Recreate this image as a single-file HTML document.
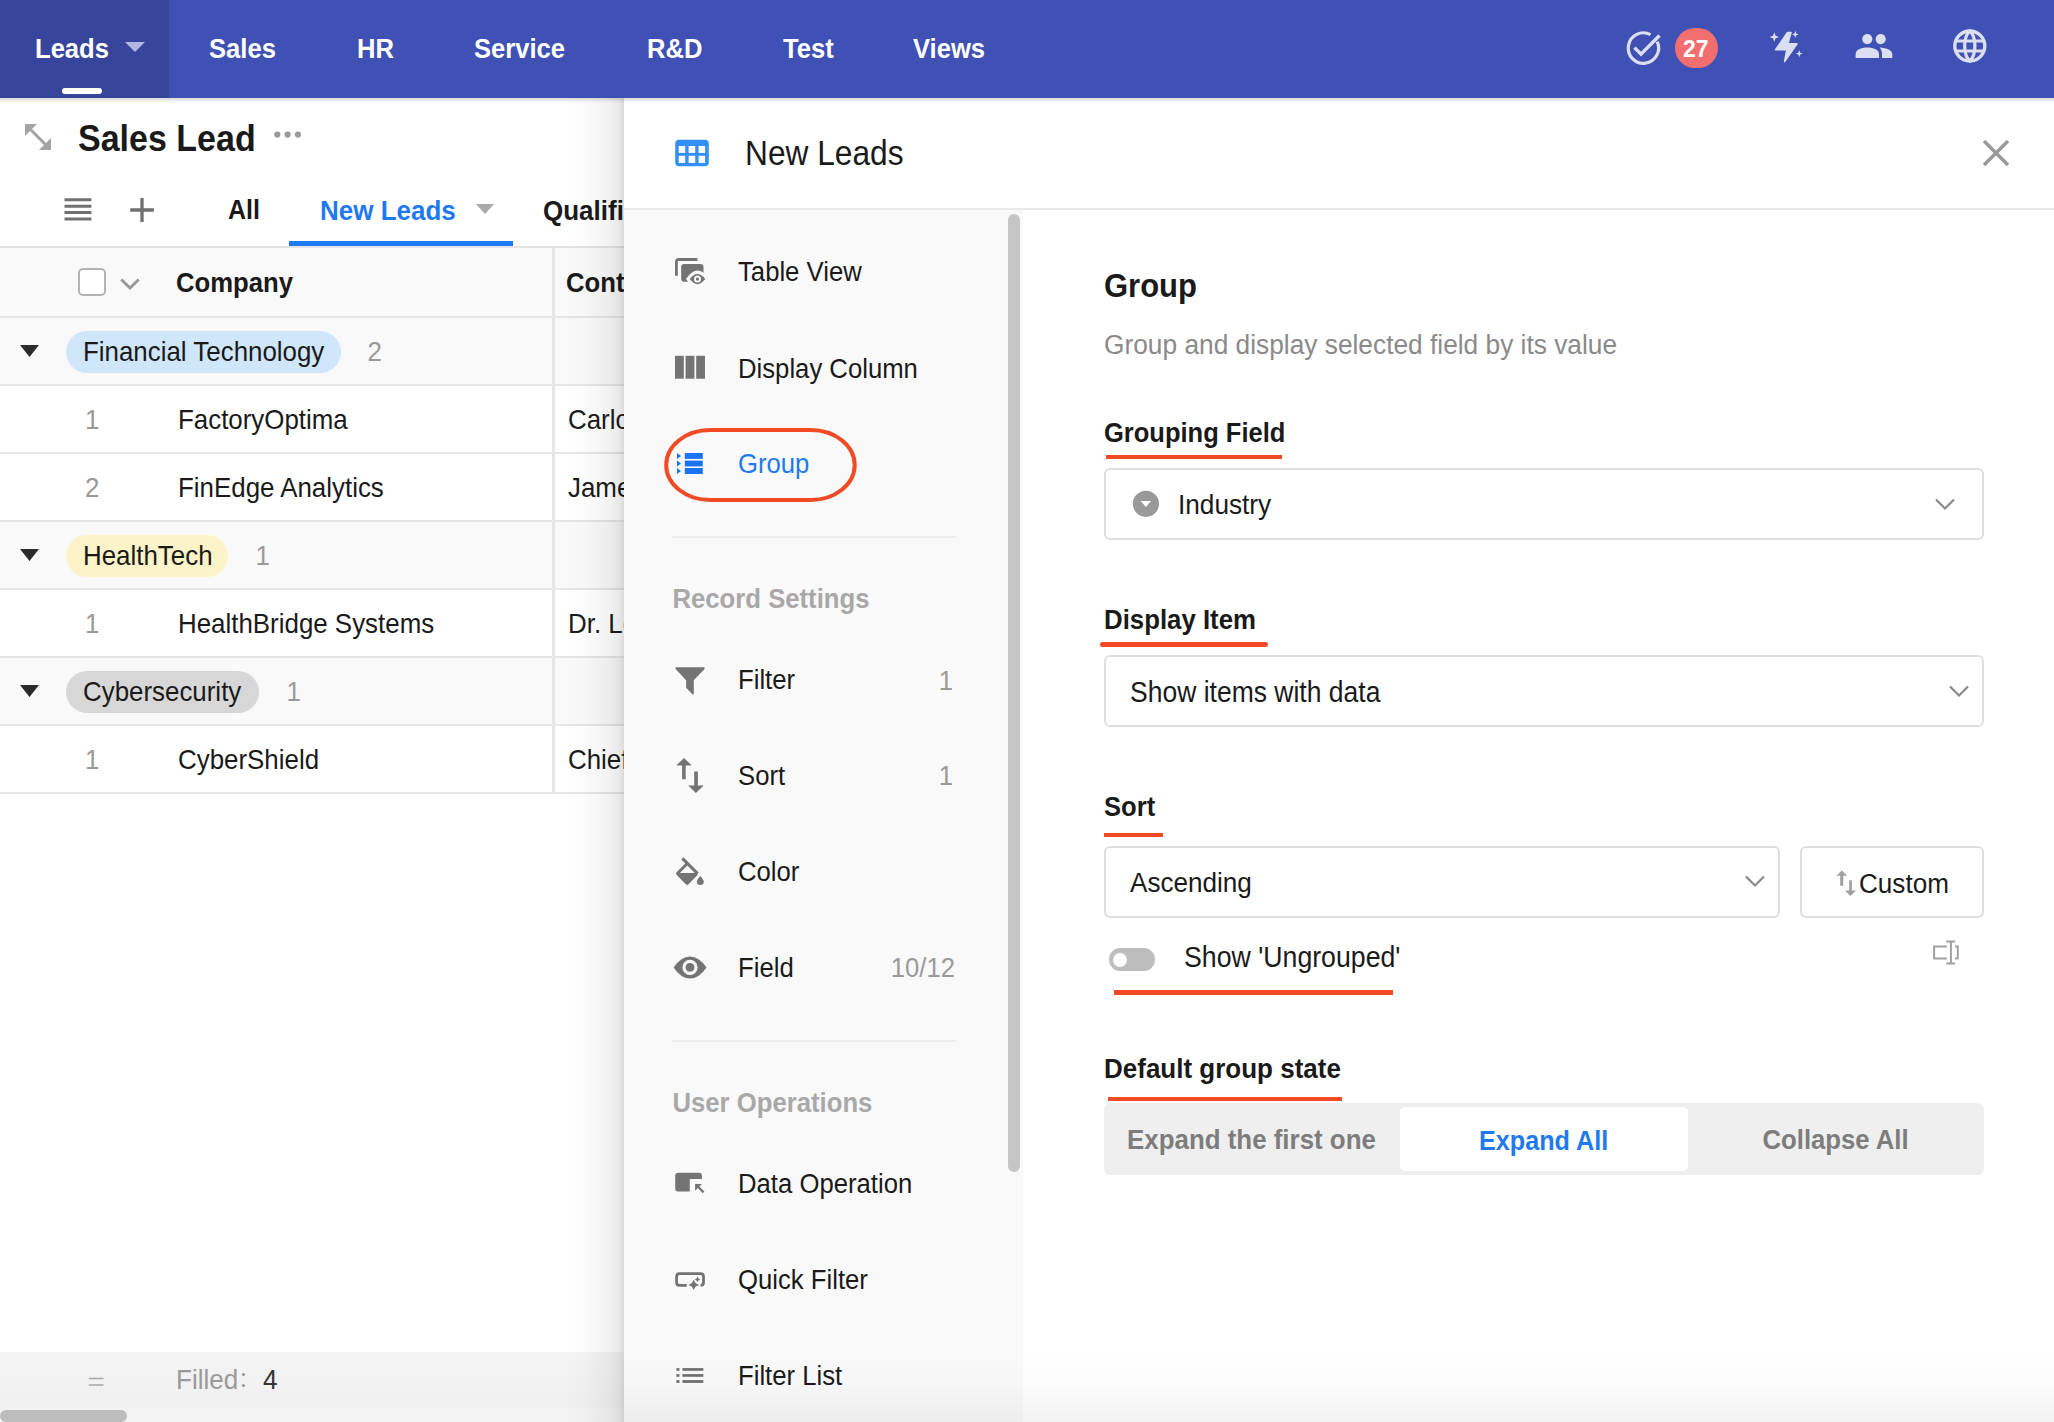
<!DOCTYPE html>
<html><head><meta charset="utf-8">
<style>
*{box-sizing:border-box;margin:0;padding:0}
html,body{width:2054px;height:1422px;overflow:hidden;background:#fff;font-family:"Liberation Sans",sans-serif;color:#1c1c1c}
.a{position:absolute}
.t{position:absolute;line-height:1;white-space:nowrap;transform:scaleY(1.08);transform-origin:0 84.65%}
.b{font-weight:bold}
#nav{left:0;top:0;width:2054px;height:98px;background:#3f51b5}
#nav .t{color:#fff;font-weight:bold;font-size:25.6px;top:37px}
</style></head><body>

<!-- NAV -->
<div id="nav" class="a">
  <div class="a" style="left:0;top:0;width:169px;height:98px;background:#37459c"></div>
  <div class="t" style="left:35px">Leads</div>
  <svg class="a" style="left:125px;top:42px" width="20" height="10" viewBox="0 0 20 10"><path d="M0 0H20L10 10Z" fill="#b2b6e0"/></svg>
  <div class="a" style="left:62px;top:88px;width:40px;height:6px;border-radius:3px;background:#fff"></div>
  <div class="t" style="left:209px">Sales</div>
  <div class="t" style="left:357px">HR</div>
  <div class="t" style="left:474px">Service</div>
  <div class="t" style="left:647px">R&amp;D</div>
  <div class="t" style="left:783px">Test</div>
  <div class="t" style="left:913px">Views</div>
  <!-- right icons -->
  <svg class="a" style="left:1620px;top:26px" width="46" height="44" viewBox="1620 26 46 44">
    <path d="M1657.2 41.6 A15.2 15.2 0 1 1 1650.5 34.6" fill="none" stroke="#dcdff2" stroke-width="3.2"/>
    <path d="M1634.5 47.6 L1641 54.2 L1659.5 35.5" fill="none" stroke="#dcdff2" stroke-width="3.4"/>
  </svg>
  <div class="a" style="left:1675px;top:28px;width:43px;height:40px;border-radius:21px;background:#f36e6e"></div>
  <div class="t b" style="left:1683px;top:38px;font-size:23px;color:#fff">27</div>
  <svg class="a" style="left:1765px;top:28px" width="42" height="38" viewBox="1765 28 42 38">
    <path d="M1787.5 32.5 L1791 32.5 L1787.8 43.8 L1797 43.8 L1784.6 61.5 L1786.8 49.8 L1775.6 49.8 Z" fill="#dcdff2" stroke="#dcdff2" stroke-width="1.6" stroke-linejoin="round"/>
    <path d="M1774.3 32.2 L1775.6 35.8 L1779.2 37 L1775.6 38.2 L1774.3 41.8 L1773 38.2 L1769.4 37 L1773 35.8 Z" fill="#dcdff2"/>
    <path d="M1795.3 30.8 L1796.2 33.5 L1798.8 34.4 L1796.2 35.3 L1795.3 38 L1794.4 35.3 L1791.8 34.4 L1794.4 33.5 Z" fill="#dcdff2"/>
    <path d="M1799.2 50 L1800.1 52.7 L1802.7 53.6 L1800.1 54.5 L1799.2 57.2 L1798.3 54.5 L1795.7 53.6 L1798.3 52.7 Z" fill="#dcdff2"/>
  </svg>
  <svg class="a" style="left:1850px;top:28px" width="48" height="36" viewBox="1850 28 48 36">
    <circle cx="1867.3" cy="39.1" r="5.1" fill="#dcdff2"/>
    <circle cx="1880.7" cy="39.1" r="5.1" fill="#dcdff2"/>
    <path d="M1855.6 58 V54 C1855.6 50 1861 47.6 1867.3 47.6 C1873.6 47.6 1879 50 1879 54 V58 Z" fill="#dcdff2"/>
    <path d="M1882 58 V54 C1882 51 1881 49.2 1879.6 47.6 C1887 48 1892.3 50.5 1892.3 54 V58 Z" fill="#dcdff2"/>
  </svg>
  <svg class="a" style="left:1950px;top:26px" width="40" height="40" viewBox="1950 26 40 40">
    <circle cx="1969.8" cy="46" r="15" fill="none" stroke="#dcdff2" stroke-width="3.4"/>
    <path d="M1969.8 31 C1963 37 1963 55 1969.8 61 C1976.6 55 1976.6 37 1969.8 31 Z" fill="none" stroke="#dcdff2" stroke-width="3.2"/>
    <path d="M1956 41 H1983.6 M1956 51 H1983.6" stroke="#dcdff2" stroke-width="3.2"/>
  </svg>
</div>



<!-- LEFT PAGE -->
<svg class="a" style="left:22px;top:120px" width="34" height="34" viewBox="22 120 34 34">
  <path d="M27.5 126.5 L48.5 147.5" stroke="#a3a3a3" stroke-width="3"/>
  <path d="M25 124 H37 L25 136 Z" fill="#a3a3a3"/>
  <path d="M51 150 H39 L51 138 Z" fill="#a3a3a3"/>
</svg>
<div class="t b" style="left:78px;top:121.5px;font-size:34px;color:#1a1a1a">Sales Lead</div>
<svg class="a" style="left:272px;top:130px" width="32" height="10" viewBox="272 130 32 10">
  <circle cx="277.3" cy="134.6" r="3.1" fill="#9a9a9a"/><circle cx="287.6" cy="134.6" r="3.1" fill="#9a9a9a"/><circle cx="297.9" cy="134.6" r="3.1" fill="#9a9a9a"/>
</svg>
<!-- tabs -->
<svg class="a" style="left:60px;top:194px" width="100" height="32" viewBox="60 194 100 32">
  <path d="M64.5 199.7 H91.4 M64.5 206.3 H91.4 M64.5 212.6 H91.4 M64.5 218.9 H91.4" stroke="#707070" stroke-width="3"/>
  <path d="M142 198 V222 M130.2 210 H153.9" stroke="#707070" stroke-width="3.3"/>
</svg>
<div class="t b" style="left:228px;top:198px;font-size:25px;color:#1a1a1a">All</div>
<div class="t b" style="left:320px;top:198px;font-size:26px;color:#1f7af2">New Leads</div>
<svg class="a" style="left:476px;top:203px" width="19" height="12" viewBox="0 0 19 12"><path d="M0 1H18L9 11Z" fill="#a8a8a8"/></svg>
<div class="t b" style="left:543px;top:198px;font-size:26px;color:#1a1a1a">Qualified</div>
<div class="a" style="left:289px;top:241px;width:224px;height:6px;background:#1f7af2"></div>
<!-- table -->
<div class="a" style="left:0;top:246px;width:624px;height:2px;background:#e3e3e3"></div>
<div class="a" style="left:0;top:248px;width:624px;height:68px;background:#f9f9f9"></div>
<div class="a" style="left:78px;top:268px;width:28px;height:28px;border:2px solid #b3b3b3;border-radius:5px;background:#fff"></div>
<svg class="a" style="left:118px;top:274px" width="24" height="20" viewBox="118 274 24 20"><path d="M121.3 279.5 L130 288 L138.7 279.5" fill="none" stroke="#999" stroke-width="3"/></svg>
<div class="t b" style="left:176px;top:271px;font-size:25.7px;color:#1a1a1a">Company</div>
<div class="t b" style="left:566px;top:271px;font-size:25.7px;color:#1a1a1a">Contact</div>
<div class="a" style="left:0;top:317px;width:624px;height:68px;background:#f9f9f9"></div>
<svg class="a" style="left:20px;top:344px" width="20" height="14" viewBox="0 0 20 14"><path d="M0 1H19L9.5 13Z" fill="#2b2b2b"/></svg>
<div class="a" style="left:66px;top:331px;width:275px;height:42px;border-radius:21px;background:#cfe6fb"></div>
<div class="t" style="left:83px;top:340px;font-size:25.9px;color:#1a1a1a">Financial Technology</div>
<div class="t" style="left:367.5px;top:340px;font-size:25.9px;color:#999">2</div>
<div class="t" style="left:85px;top:408px;font-size:25.9px;color:#999">1</div>
<div class="t" style="left:178px;top:408px;font-size:25.9px;color:#1a1a1a">FactoryOptima</div>
<div class="t" style="left:568px;top:408px;font-size:25.9px;color:#1a1a1a">Carlos</div>
<div class="t" style="left:85px;top:476px;font-size:25.9px;color:#999">2</div>
<div class="t" style="left:178px;top:476px;font-size:25.9px;color:#1a1a1a">FinEdge Analytics</div>
<div class="t" style="left:568px;top:476px;font-size:25.9px;color:#1a1a1a">James</div>
<div class="a" style="left:0;top:521px;width:624px;height:68px;background:#f9f9f9"></div>
<svg class="a" style="left:20px;top:548px" width="20" height="14" viewBox="0 0 20 14"><path d="M0 1H19L9.5 13Z" fill="#2b2b2b"/></svg>
<div class="a" style="left:66px;top:535px;width:162px;height:42px;border-radius:21px;background:#fdf3c8"></div>
<div class="t" style="left:83px;top:544px;font-size:25.9px;color:#1a1a1a">HealthTech</div>
<div class="t" style="left:255.5px;top:544px;font-size:25.9px;color:#999">1</div>
<div class="t" style="left:85px;top:612px;font-size:25.9px;color:#999">1</div>
<div class="t" style="left:178px;top:612px;font-size:25.9px;color:#1a1a1a">HealthBridge Systems</div>
<div class="t" style="left:568px;top:612px;font-size:25.9px;color:#1a1a1a">Dr. Lee</div>
<div class="a" style="left:0;top:657px;width:624px;height:68px;background:#f9f9f9"></div>
<svg class="a" style="left:20px;top:684px" width="20" height="14" viewBox="0 0 20 14"><path d="M0 1H19L9.5 13Z" fill="#2b2b2b"/></svg>
<div class="a" style="left:66px;top:671px;width:193px;height:42px;border-radius:21px;background:#d7d7d7"></div>
<div class="t" style="left:83px;top:680px;font-size:25.9px;color:#1a1a1a">Cybersecurity</div>
<div class="t" style="left:286.5px;top:680px;font-size:25.9px;color:#999">1</div>
<div class="t" style="left:85px;top:748px;font-size:25.9px;color:#999">1</div>
<div class="t" style="left:178px;top:748px;font-size:25.9px;color:#1a1a1a">CyberShield</div>
<div class="t" style="left:568px;top:748px;font-size:25.9px;color:#1a1a1a">Chief</div>
<div class="a" style="left:0;top:316px;width:624px;height:2px;background:#e6e6e6"></div>
<div class="a" style="left:0;top:384px;width:624px;height:2px;background:#e6e6e6"></div>
<div class="a" style="left:0;top:452px;width:624px;height:2px;background:#e6e6e6"></div>
<div class="a" style="left:0;top:520px;width:624px;height:2px;background:#e6e6e6"></div>
<div class="a" style="left:0;top:588px;width:624px;height:2px;background:#e6e6e6"></div>
<div class="a" style="left:0;top:656px;width:624px;height:2px;background:#e6e6e6"></div>
<div class="a" style="left:0;top:724px;width:624px;height:2px;background:#e6e6e6"></div>
<div class="a" style="left:0;top:792px;width:624px;height:2px;background:#e6e6e6"></div>
<div class="a" style="left:552px;top:248px;width:3px;height:545px;background:#e6e6e6"></div>
<div class="a" style="left:0;top:1352px;width:624px;height:56px;background:linear-gradient(#f4f4f4,#f0f0f0)"></div>
<div class="a" style="left:0;top:1408px;width:624px;height:14px;background:#f3f3f3"></div>
<div class="a" style="left:0;top:1410px;width:127px;height:12px;border-radius:6px;background:#bdbdbd"></div>
<svg class="a" style="left:86px;top:1374px" width="20" height="14" viewBox="86 1374 20 14"><path d="M88.8 1378.5 H103.5 M88.8 1385 H103.5" stroke="#a6a6a6" stroke-width="1.6"/></svg>
<div class="t" style="left:176px;top:1367px;font-size:26px;color:#9a9a9a">Filled</div>
<svg class="a" style="left:238px;top:1370px" width="10" height="20" viewBox="238 1370 10 20"><circle cx="243.5" cy="1374.5" r="1.6" fill="#9a9a9a"/><circle cx="243.5" cy="1385.5" r="1.6" fill="#9a9a9a"/></svg>
<div class="t" style="left:263px;top:1367px;font-size:26px;color:#333">4</div>


<!-- PANEL -->
<div class="a" style="left:624px;top:98px;width:1430px;height:1324px;background:#fff;"></div>
<div class="a" style="left:564px;top:98px;width:60px;height:1324px;background:linear-gradient(to right,rgba(0,0,0,0) 0%,rgba(0,0,0,0.015) 40%,rgba(0,0,0,0.05) 75%,rgba(0,0,0,0.09) 92%,rgba(0,0,0,0.14) 100%)"></div>
<div class="a" style="left:624px;top:208px;width:1430px;height:2px;background:#e9e9e9"></div>
<svg class="a" style="left:672px;top:136px" width="40" height="34" viewBox="672 136 40 34">
  <rect x="675.2" y="139.7" width="33.6" height="26.5" rx="4" fill="#3390f7"/>
  <rect x="678.7" y="146" width="6.5" height="6.9" fill="#fff"/><rect x="688.6" y="146" width="6.6" height="6.9" fill="#fff"/><rect x="698.6" y="146" width="6.5" height="6.9" fill="#fff"/>
  <rect x="678.7" y="155.8" width="6.5" height="7.1" fill="#fff"/><rect x="688.6" y="155.8" width="6.6" height="7.1" fill="#fff"/><rect x="698.6" y="155.8" width="6.5" height="7.1" fill="#fff"/>
</svg>
<div class="t" style="left:745px;top:138.9px;font-size:31.7px;color:#1a1a1a;">New Leads</div>
<svg class="a" style="left:1978px;top:135px" width="36" height="36" viewBox="1978 135 36 36"><path d="M1984 141 L2008 165 M2008 141 L1984 165" stroke="#999" stroke-width="3.5"/></svg>
<!-- sidebar -->
<div class="a" style="left:624px;top:210px;width:399px;height:1212px;background:#f9f9f9"></div>
<div class="a" style="left:1008px;top:214px;width:12px;height:958px;border-radius:6px;background:#c6c6c6"></div>
<svg class="a" style="left:670px;top:250px" width="40" height="40" viewBox="670 250 40 40">
  <path d="M676.4 275.8 V262 Q676.4 259.5 679 259.5 H697.4" fill="none" stroke="#747474" stroke-width="2.8"/>
  <rect x="681.2" y="264" width="22.3" height="17.8" rx="3" fill="#747474"/>
  <path d="M686 279.1 Q691.5 270.6 697.5 270.6 Q703.5 270.6 709 279.1 Q703.5 287.6 697.5 287.6 Q691.5 287.6 686 279.1 Z" fill="#f9f9f9"/>
  <path d="M689.8 279.1 Q693.5 274 697.5 274 Q701.5 274 705.2 279.1 Q701.5 284.2 697.5 284.2 Q693.5 284.2 689.8 279.1 Z" fill="#747474"/>
  <circle cx="697.5" cy="279.1" r="3.5" fill="#f9f9f9"/><circle cx="697.5" cy="279.1" r="1.6" fill="#747474"/>
</svg>
<svg class="a" style="left:670px;top:350px" width="40" height="34" viewBox="670 350 40 34">
  <rect x="675" y="355.8" width="8.8" height="22.9" fill="#747474"/><rect x="685.6" y="355.8" width="8.8" height="22.9" fill="#747474"/><rect x="696.2" y="355.8" width="8.8" height="22.9" fill="#747474"/>
</svg>
<svg class="a" style="left:672px;top:448px" width="36" height="30" viewBox="672 448 36 30">
  <path d="M677 453 L681 456 L677 459 Z M677 460.6 L681 463.5 L677 466.4 Z M677 468 L681 471 L677 474 Z" fill="#1a73f5"/>
  <rect x="684.8" y="453" width="18" height="5.9" fill="#1a73f5"/><rect x="684.8" y="460.6" width="18" height="5.8" fill="#1a73f5"/><rect x="684.8" y="468" width="18" height="6" fill="#1a73f5"/>
</svg>
<svg class="a" style="left:660px;top:424px" width="202" height="82" viewBox="660 424 202 82">
  <rect x="666.2" y="430" width="188.5" height="70" rx="44" ry="35" fill="none" stroke="#f24a25" stroke-width="4"/>
</svg>
<div class="a" style="left:672px;top:536px;width:284px;height:2px;background:#ebebeb"></div>
<svg class="a" style="left:670px;top:660px" width="40" height="40" viewBox="670 660 40 40">
  <path d="M676.5 667.3 H703.6 Q705.5 667.3 704.5 669 L693.8 680.3 V693 Q693.8 695.5 692.2 694 L686.1 687.7 V680.3 L675.6 669 Q674.6 667.3 676.5 667.3 Z" fill="#747474"/>
</svg>
<svg class="a" style="left:670px;top:752px" width="40" height="46" viewBox="670 752 40 46">
  <path d="M684 757.9 L691.7 765.5 H685.7 V779.2 H682.1 V765.5 H676.3 Z" fill="#747474"/>
  <path d="M695.9 793.1 L688.2 785.5 H694.2 V771.4 H697.9 V785.5 H703.7 Z" fill="#747474"/>
</svg>
<svg class="a" style="left:670px;top:852px" width="40" height="40" viewBox="670 852 40 40">
  <path d="M682.4 858.4 L697.6 873.6" stroke="#747474" stroke-width="3"/>
  <path d="M687.8 863 L677.6 873.2 Q677.3 873.5 677.6 873.8 L686.9 883.1 Q687.2 883.4 687.5 883.1 L696.8 873.8" fill="none" stroke="#747474" stroke-width="3" stroke-linejoin="round"/>
  <path d="M677.5 873.1 H697.2 L687.2 883.2 Z" fill="#747474"/>
  <path d="M700.3 876 Q703.8 880 703.8 881.6 A3.5 3.5 0 0 1 696.8 881.6 Q696.8 880 700.3 876 Z" fill="#747474"/>
</svg>
<svg class="a" style="left:670px;top:950px" width="40" height="34" viewBox="670 950 40 34">
  <path d="M673.6 967.4 Q681 956.4 690 956.4 Q699 956.4 706.5 967.4 Q699 978.5 690 978.5 Q681 978.5 673.6 967.4 Z" fill="#747474"/>
  <circle cx="690" cy="967.4" r="7.6" fill="#f9f9f9"/><circle cx="690" cy="967.4" r="4.4" fill="#747474"/>
</svg>
<div class="a" style="left:672px;top:1040px;width:284px;height:2px;background:#ebebeb"></div>
<svg class="a" style="left:670px;top:1166px" width="40" height="32" viewBox="670 1166 40 32">
  <path d="M678.2 1172.8 H699 Q701.9 1172.8 701.9 1175.8 V1179 H689.8 V1191.5 H678.2 Q675.2 1191.5 675.2 1188.5 V1175.8 Q675.2 1172.8 678.2 1172.8 Z" fill="#747474"/>
  <path d="M695.1 1184.1 H701.9 L699.3 1186.5 L704.4 1191.6 L702.8 1193.2 L697.7 1188.1 L695.1 1190.9 Z" fill="#747474"/>
</svg>
<svg class="a" style="left:670px;top:1266px" width="40" height="30" viewBox="670 1266 40 30">
  <path d="M686.8 1285.4 H679.5 Q676.6 1285.4 676.6 1282.5 V1276.5 Q676.6 1273.6 679.5 1273.6 H700.6 Q703.5 1273.6 703.5 1276.5 V1282.5 Q703.5 1285.4 700.6 1285.4" fill="none" stroke="#747474" stroke-width="2.8"/>
  <path d="M693.7 1279.8 L695.5 1283.1 L698.9 1284.9 L695.5 1286.7 L693.7 1290 L691.9 1286.7 L688.5 1284.9 L691.9 1283.1 Z" fill="#747474"/>
  <path d="M697.5 1276.6 L698.5 1278.4 L700.3 1279.4 L698.5 1280.4 L697.5 1282.2 L696.5 1280.4 L694.7 1279.4 L696.5 1278.4 Z" fill="#747474"/>
</svg>
<svg class="a" style="left:670px;top:1362px" width="40" height="26" viewBox="670 1362 40 26">
  <rect x="676.4" y="1368.1" width="3" height="2.7" fill="#6f6f6f"/><rect x="676.4" y="1374.1" width="3" height="2.7" fill="#6f6f6f"/><rect x="676.4" y="1380.1" width="3" height="2.8" fill="#6f6f6f"/>
  <rect x="682.4" y="1368.1" width="20.9" height="2.7" fill="#6f6f6f"/><rect x="682.4" y="1374.1" width="20.9" height="2.7" fill="#6f6f6f"/><rect x="682.4" y="1380.1" width="20.9" height="2.8" fill="#6f6f6f"/>
</svg>
<div class="t" style="left:738px;top:260.2px;font-size:25.7px;color:#1a1a1a;">Table View</div>
<div class="t" style="left:738px;top:357.0px;font-size:25.7px;color:#1a1a1a;">Display Column</div>
<div class="t" style="left:738px;top:452.2px;font-size:25.7px;color:#1f7af2;">Group</div>
<div class="t b" style="left:672.5px;top:587.2px;font-size:25.7px;color:#a8a8a8;">Record Settings</div>
<div class="t" style="left:738px;top:667.6px;font-size:25.7px;color:#1a1a1a;">Filter</div>
<div class="t" style="left:738px;top:764.2px;font-size:25.7px;color:#1a1a1a;">Sort</div>
<div class="t" style="left:738px;top:860.2px;font-size:25.7px;color:#1a1a1a;">Color</div>
<div class="t" style="left:738px;top:956.2px;font-size:25.7px;color:#1a1a1a;">Field</div>
<div class="t b" style="left:672.5px;top:1091.4px;font-size:25.7px;color:#a8a8a8;">User Operations</div>
<div class="t" style="left:738px;top:1172.2px;font-size:25.7px;color:#1a1a1a;">Data Operation</div>
<div class="t" style="left:738px;top:1267.7px;font-size:25.7px;color:#1a1a1a;">Quick Filter</div>
<div class="t" style="left:738px;top:1364.2px;font-size:25.7px;color:#1a1a1a;">Filter List</div>
<div class="t" style="right:1101px;top:668.6px;font-size:25.7px;color:#9a9a9a">1</div>
<div class="t" style="right:1101px;top:764.2px;font-size:25.7px;color:#9a9a9a">1</div>
<div class="t" style="right:1099px;top:956.2px;font-size:25.7px;color:#9a9a9a">10/12</div>
<div class="t b" style="left:1104px;top:270.7px;font-size:31px;color:#1a1a1a;">Group</div>
<div class="t" style="left:1104px;top:332.4px;font-size:26.3px;color:#8a8a8a;">Group and display selected field by its value</div>
<div class="t b" style="left:1104px;top:421.4px;font-size:25.5px;color:#1a1a1a;">Grouping Field</div>
<div class="a" style="left:1106px;top:455px;width:176px;height:4px;background:#f24a25"></div>
<div class="a" style="left:1104px;top:468px;width:880px;height:72px;border:2px solid #dedede;border-radius:6px;background:#fff"></div>
<svg class="a" style="left:1130px;top:488px" width="32" height="32" viewBox="1130 488 32 32"><circle cx="1145.9" cy="503.8" r="13.1" fill="#999"/><path d="M1140.7 501.1 H1151.1 L1145.9 506.9 Z" fill="#fff"/></svg>
<div class="t" style="left:1178px;top:491.8px;font-size:26.2px;color:#1a1a1a;">Industry</div>
<svg class="a" style="left:1934px;top:497px" width="24" height="16" viewBox="1934 497 24 16"><path d="M1936 499.5 L1945 508.5 L1954 499.5" fill="none" stroke="#8a8a8a" stroke-width="2.2"/></svg>
<div class="t b" style="left:1104px;top:608.0px;font-size:25.8px;color:#1a1a1a;">Display Item</div>
<div class="a" style="left:1100px;top:642px;width:168px;height:5px;border-radius:2.5px;background:#f24a25"></div>
<div class="a" style="left:1104px;top:655px;width:880px;height:72px;border:2px solid #dedede;border-radius:6px;background:#fff"></div>
<div class="t" style="left:1130px;top:679.9px;font-size:26.5px;color:#1a1a1a;">Show items with data</div>
<svg class="a" style="left:1948px;top:684px" width="24" height="16" viewBox="1948 684 24 16"><path d="M1950 686.5 L1959 695.5 L1968 686.5" fill="none" stroke="#8a8a8a" stroke-width="2.2"/></svg>
<div class="t b" style="left:1104px;top:795.2px;font-size:25.6px;color:#1a1a1a;">Sort</div>
<div class="a" style="left:1104px;top:832.5px;width:59px;height:4.3px;background:#f24a25"></div>
<div class="a" style="left:1104px;top:846px;width:676px;height:72px;border:2px solid #dedede;border-radius:6px;background:#fff"></div>
<div class="t" style="left:1130px;top:869.7px;font-size:26.1px;color:#1a1a1a;">Ascending</div>
<svg class="a" style="left:1744px;top:874px" width="24" height="16" viewBox="1744 874 24 16"><path d="M1746 876.5 L1755 885.5 L1764 876.5" fill="none" stroke="#8a8a8a" stroke-width="2.2"/></svg>
<div class="a" style="left:1800px;top:846px;width:184px;height:72px;border:2px solid #dedede;border-radius:6px;background:#fff"></div>
<svg class="a" style="left:1832px;top:866px" width="28" height="34" viewBox="1832 866 28 34">
  <path d="M1841.8 870.4 L1847.2 875.7 H1843.2 V885.8 H1840.2 V875.7 H1836.4 Z" fill="#a0a0a0"/>
  <path d="M1850.5 895.9 L1844.9 890.4 H1849.2 V880.3 H1851.9 V890.4 H1856 Z" fill="#a0a0a0"/>
</svg>
<div class="t" style="left:1859px;top:871.1px;font-size:26.1px;color:#1a1a1a;">Custom</div>
<div class="a" style="left:1108.8px;top:948.4px;width:46.2px;height:23px;border-radius:11.5px;background:#bdbdbd"></div>
<div class="a" style="left:1112.8px;top:952.8px;width:14.4px;height:14.4px;border-radius:50%;background:#fff"></div>
<div class="t" style="left:1184px;top:944.6px;font-size:26.7px;color:#1a1a1a;">Show 'Ungrouped'</div>
<div class="a" style="left:1114px;top:990.4px;width:279px;height:4.3px;background:#f24a25"></div>
<svg class="a" style="left:1928px;top:936px" width="36" height="32" viewBox="1928 936 36 32">
  <path d="M1946.9 946.5 H1934.1 V958.6 H1946.9" fill="none" stroke="#a0a0a0" stroke-width="2"/>
  <path d="M1955 946.5 H1957.8 V958.6 H1955" fill="none" stroke="#a0a0a0" stroke-width="2"/>
  <path d="M1950.9 941.4 V963.5 M1946.3 941.4 H1955 M1946.3 963.5 H1955" fill="none" stroke="#a0a0a0" stroke-width="2"/>
</svg>
<div class="t b" style="left:1104px;top:1055.7px;font-size:26px;color:#1a1a1a;">Default group state</div>
<div class="a" style="left:1107.5px;top:1097.3px;width:234px;height:3.8px;background:#f24a25"></div>
<div class="a" style="left:1104px;top:1103px;width:880px;height:72px;border-radius:6px;background:#efefef"></div>
<div class="a" style="left:1400px;top:1107px;width:288px;height:64px;border-radius:5px;background:#fff"></div>
<div class="t b" style="left:1127px;top:1127.9px;font-size:25.9px;color:#7d7d7d;">Expand the first one</div>
<div class="t b" style="left:1479px;top:1128.5px;font-size:25.2px;color:#1f7af2;">Expand All</div>
<div class="t b" style="left:1762.5px;top:1128.0px;font-size:25.7px;color:#7d7d7d;">Collapse All</div>
<div class="a" style="left:624px;top:1350px;width:1430px;height:72px;background:linear-gradient(rgba(0,0,0,0),rgba(0,0,0,0.012) 50%,rgba(0,0,0,0.05))"></div>

<div class="a" style="left:0;top:98px;width:2054px;height:5px;background:linear-gradient(rgba(0,0,0,0.15),rgba(0,0,0,0))"></div>
</body></html>
